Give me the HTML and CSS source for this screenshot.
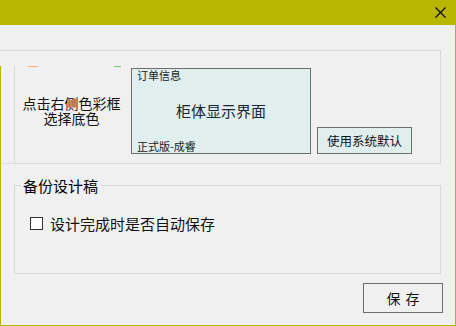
FILE: index.html
```html
<!DOCTYPE html>
<html lang="zh-CN">
<head>
<meta charset="utf-8">
<title>设置</title>
<link rel="stylesheet" href="styles.css">
</head>
<body>
<div class="window">
  <div class="titlebar">
    <svg class="close" width="11" height="11" viewBox="0 0 11 11"><path d="M0.5 0.5L10.5 10.5M10.5 0.5L0.5 10.5" stroke="#000" stroke-width="1.1" fill="none"/></svg>
  </div>
  <div class="content">
    <div class="panel">
      <div class="inner">
        <div class="swatches"><span class="sw orange"></span><span class="sw green"></span></div>
        <div class="row">
          <div class="hint"><div>点击右侧色彩框</div><div>选择底色</div></div>
          <div class="preview">
            <div class="small">订单信息</div>
            <div class="title">柜体显示界面</div>
            <div class="small">正式版-成睿</div>
          </div>
          <button class="btn default">使用系统默认</button>
        </div>
      </div>
    </div>
    <fieldset class="group">
      <legend>备份设计稿</legend>
      <label class="check"><span class="box"></span>设计完成时是否自动保存</label>
    </fieldset>
    <div class="actions"><button class="btn save">保 存</button></div>
  </div>
</div>
</body>
</html>
```
FILE: styles.css
```css
html, body {
  margin: 0;
  padding: 0;
  background: #f0f0f0;
}
body {
  font-family: "Noto Sans CJK SC", "Microsoft YaHei", sans-serif;
  color: #111;
}
.window {
  position: relative;
  width: 456px;
  height: 326px;
  box-sizing: border-box;
  background: #f0f0f0;
  border-right: 1px solid #b8b600;
  border-bottom: 1px solid #b8b600;
  display: flex;
  flex-direction: column;
  overflow: hidden;
}
.window::before {
  content: "";
  position: absolute;
  left: 0;
  top: 66px;
  bottom: 0;
  width: 1px;
  background: #b8b600;
}
.titlebar {
  height: 25px;
  flex: none;
  background: #b8b600;
  display: flex;
  justify-content: flex-end;
  align-items: center;
}
.close {
  display: block;
  margin-right: 9px;
}
.content {
  padding-top: 25px;
  display: flex;
  flex-direction: column;
}
.panel {
  width: 441px;
  height: 114px;
  box-sizing: border-box;
  border-top: 1px solid #dadada;
  border-right: 1px solid #dadada;
  border-bottom: 1px solid #dadada;
  padding-top: 15px;
}
.inner {
  margin-left: 14px;
  height: 97px;
  border-left: 1px solid #dadada;
  display: flex;
  flex-direction: column;
}
.swatches {
  height: 1px;
  display: flex;
}
.sw {
  display: block;
  height: 1px;
}
.orange {
  margin-left: 13px;
  width: 10px;
  background: #f6b27e;
}
.green {
  margin-left: 76px;
  width: 7px;
  background: #78c37a;
}
.row {
  margin-top: 1px;
  display: flex;
  align-items: flex-end;
}
.hint {
  width: 113px;
  align-self: center;
  text-align: center;
  font-size: 14px;
  line-height: 15.5px;
  color: #111;
}
.preview {
  margin-left: 3px;
  width: 180px;
  height: 86px;
  box-sizing: border-box;
  border: 1px solid #6d6d6d;
  background: #e0eeee;
  padding: 0 5px;
  display: flex;
  flex-direction: column;
  justify-content: space-between;
}
.small {
  font-size: 11px;
  line-height: 13px;
  color: #222;
}
.title {
  font-size: 15px;
  line-height: 18px;
  text-align: center;
  color: #1c2636;
}
.btn {
  font-family: "Noto Sans CJK SC", "Microsoft YaHei", sans-serif;
  box-sizing: border-box;
  border: 1px solid #6d6d6d;
  padding: 0;
  margin: 0;
  color: #111;
  border-radius: 0;
}
.default {
  margin-left: 6px;
  width: 95px;
  height: 27px;
  background: #e1eeee;
  font-size: 12.5px;
  line-height: 25px;
}
.group {
  margin: 13px 14px 0 14px;
  padding: 0;
  height: 97px;
  box-sizing: border-box;
  border: 1px solid #dadada;
  min-width: 0;
}
.group legend {
  margin-left: 6px;
  padding: 0 2px;
  font-size: 15px;
  line-height: 17px;
  color: #000;
}
.check {
  display: flex;
  align-items: center;
  height: 20px;
  margin: 19px 0 0 15px;
  font-size: 15px;
  color: #111;
}
.box {
  display: block;
  width: 13px;
  height: 13px;
  box-sizing: border-box;
  border: 1px solid #333;
  background: #fff;
  margin-right: 7px;
}
.actions {
  display: flex;
  justify-content: flex-end;
  margin-top: 9px;
  padding-right: 12px;
}
.save {
  width: 80px;
  height: 30px;
  background: #f0f0f0;
  font-size: 14px;
  line-height: 28px;
  word-spacing: 2px;
}
```
